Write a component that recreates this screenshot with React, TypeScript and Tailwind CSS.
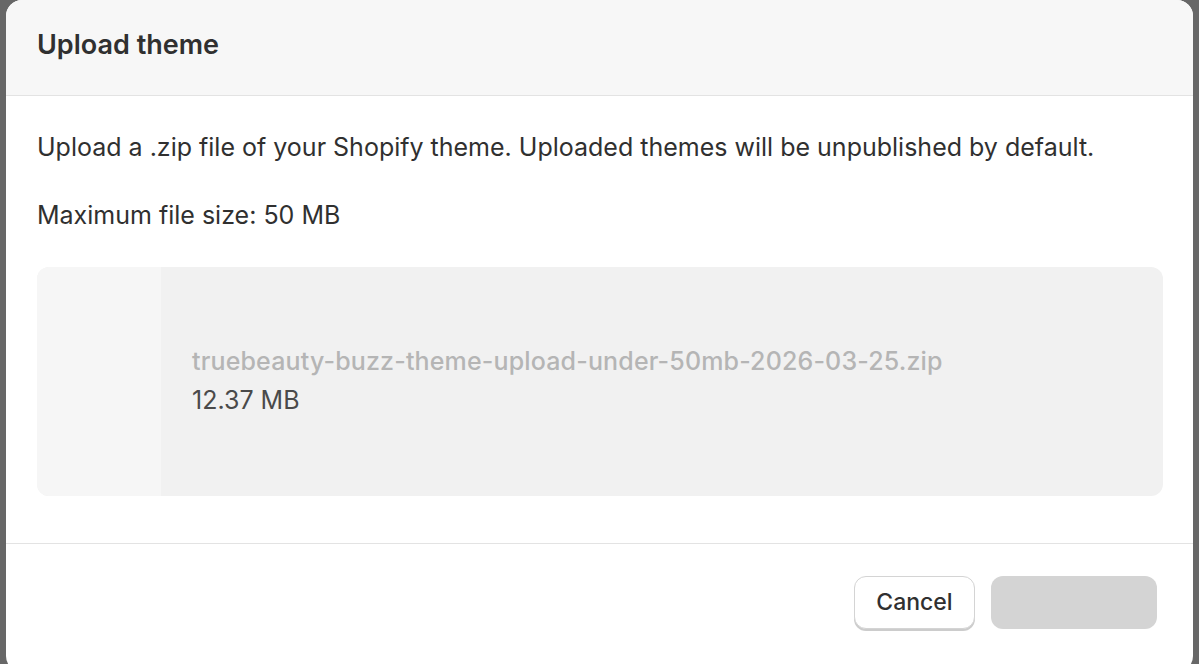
import React from 'react';

export default function App() {
  return (
    <div
      className="h-[664px] w-full overflow-hidden bg-[#676767] px-[6px]"
      style={{ fontFamily: 'Inter, "Noto Sans", sans-serif' }}
    >
      <div className="flex h-[672px] flex-col overflow-hidden rounded-[16px] bg-white">
        <div className="flex h-[96px] shrink-0 items-center border-b border-[#e3e3e3] bg-[#f7f7f7] px-[31px] pb-[4px]">
          <h2 className="text-[27px] font-semibold text-[#303030]">Upload theme</h2>
        </div>

        <div className="flex flex-col pl-[31px] pr-[30px] pt-[36px]">
          <p className="text-[25px] leading-[30px] text-[#303030]">
            Upload a .zip file of your Shopify theme. Uploaded themes will be unpublished by default.
          </p>
          <p className="mt-[38px] text-[25px] leading-[30px] text-[#303030]">Maximum file size: 50 MB</p>

          <div className="mt-[37px] flex h-[229px] overflow-hidden rounded-[12px] bg-[#f1f1f1]">
            <div className="w-[124px] shrink-0 bg-[#f6f6f6]" />
            <div className="flex flex-col justify-center pl-[31px] pb-[2px]">
              <div className="text-[25px] font-medium leading-[39px] tracking-[0.15px] text-[#b5b5b5]">
                truebeauty-buzz-theme-upload-under-50mb-2026-03-25.zip
              </div>
              <div className="text-[25px] leading-[39px] text-[#4a4a4a]">12.37 MB</div>
            </div>
          </div>
        </div>

        <div className="mt-[47px] flex justify-end gap-[16px] border-t border-[#e3e3e3] px-[36px] pt-[32px]">
          <button className="h-[53px] w-[121px] rounded-[12px] border border-[#d4d4d4] bg-white text-[23px] font-medium text-[#303030] shadow-[0_2px_0_#cccccc]">
            Cancel
          </button>
          <button className="h-[53px] w-[166px] rounded-[12px] bg-[#d4d4d4]" />
        </div>
      </div>
    </div>
  );
}
